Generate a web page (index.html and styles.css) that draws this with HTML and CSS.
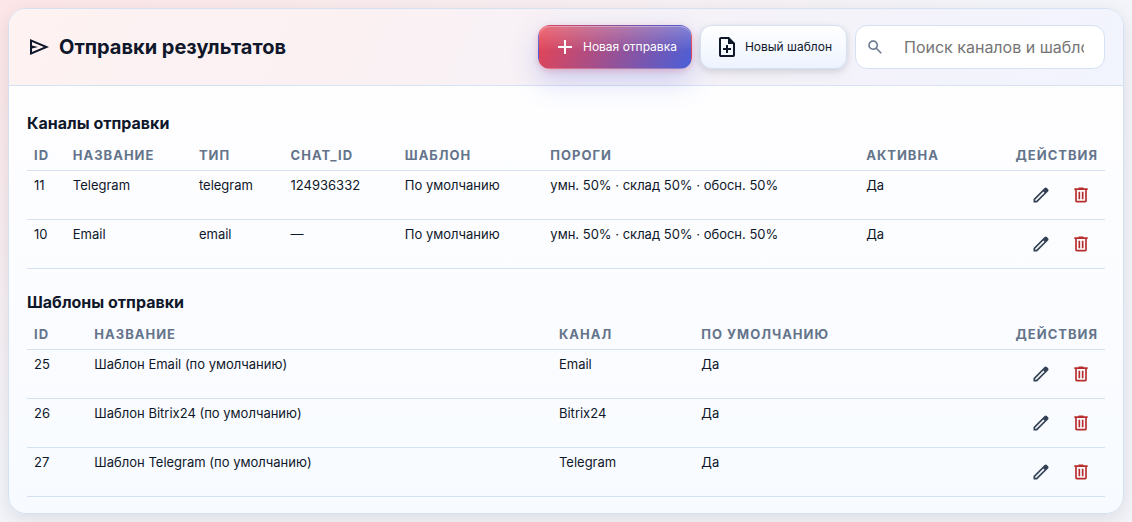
FILE: index.html
```
<!DOCTYPE html>
<html lang="ru">
<head>
  <meta charset="UTF-8" />
  <meta name="viewport" content="width=device-width, initial-scale=1.0"/>
  <title>Отправки результатов</title>
  <link rel="stylesheet" href="styles.css">
</head>
<body>

<svg class="sprite" aria-hidden="true">
  <symbol id="i-send" viewBox="0 -960 960 960"><path d="M120-160v-640l760 320-760 320Zm80-120 474-200-474-200v140l240 60-240 60v140Z"/></symbol>
  <symbol id="i-add" viewBox="0 -960 960 960"><path d="M440-440H200v-80h240v-240h80v240h240v80H520v240h-80v-240Z"/></symbol>
  <symbol id="i-note" viewBox="0 -960 960 960"><path d="M440-240h80v-120h120v-80H520v-120h-80v120H320v80h120v120ZM240-80q-33 0-56.5-23.5T160-160v-640q0-33 23.5-56.5T240-880h320l240 240v480q0 33-23.5 56.5T720-80H240Zm280-520v-200H240v640h480v-440H520Z"/></symbol>
  <symbol id="i-search" viewBox="0 -960 960 960"><path d="M784-120 532-372q-30 24-69 38t-83 14q-109 0-184.5-75.5T120-580q0-109 75.5-184.5T380-840q109 0 184.5 75.5T640-580q0 44-14 83t-38 69l252 252-56 56ZM380-400q75 0 127.5-52.5T560-580q0-75-52.5-127.5T380-760q-75 0-127.5 52.5T200-580q0 75 52.5 127.5T380-400Z"/></symbol>
  <symbol id="i-edit" viewBox="0 -960 960 960"><path d="M200-200h57l391-391-57-57-391 391v57Zm-80 80v-170l528-527q12-11 26.5-17t30.5-6q16 0 31 6t26 18l55 56q12 11 17.5 26t5.5 30q0 16-5.5 30.5T817-647L290-120H120Z"/></symbol>
  <symbol id="i-delete" viewBox="0 -960 960 960"><path d="M280-120q-33 0-56.5-23.5T200-200v-520h-40v-80h200v-40h240v40h200v80h-40v520q0 33-23.5 56.5T680-120H280Zm400-600H280v520h400v-520ZM360-280h80v-360h-80v360Zm160 0h80v-360h-80v360Z"/></symbol>
</svg>

<main class="card">
  <header class="card-head">
    <h1 class="title"><svg class="icon"><use href="#i-send"/></svg>Отправки результатов</h1>
    <div class="toolbar">
      <button type="button" class="btn btn-primary"><svg class="icon"><use href="#i-add"/></svg>Новая отправка</button>
      <button type="button" class="btn"><svg class="icon"><use href="#i-note"/></svg>Новый шаблон</button>
      <label class="search">
        <svg class="icon"><use href="#i-search"/></svg>
        <input type="text" aria-label="Поиск" placeholder="Поиск каналов и шаблонов">
      </label>
    </div>
  </header>

  <div class="card-body">
    <section>
      <h2>Каналы отправки</h2>
      <table class="table channels">
        <colgroup><col class="c-id"><col class="c-name"><col class="c-type"><col class="c-chat"><col class="c-tpl"><col class="c-limits"><col class="c-active"><col></colgroup>
        <thead>
          <tr><th>ID</th><th>Название</th><th>Тип</th><th>chat_id</th><th>Шаблон</th><th>Пороги</th><th>Активна</th><th class="right">Действия</th></tr>
        </thead>
        <tbody>
          <tr>
            <td>11</td><td>Telegram</td><td>telegram</td><td>124936332</td><td>По умолчанию</td><td>умн. 50% · склад 50% · обосн. 50%</td><td>Да</td>
            <td><div class="actions">
              <button type="button" class="icon-btn" aria-label="Изменить"><svg class="icon"><use href="#i-edit"/></svg></button>
              <button type="button" class="icon-btn danger" aria-label="Удалить"><svg class="icon"><use href="#i-delete"/></svg></button>
            </div></td>
          </tr>
          <tr>
            <td>10</td><td>Email</td><td>email</td><td>—</td><td>По умолчанию</td><td>умн. 50% · склад 50% · обосн. 50%</td><td>Да</td>
            <td><div class="actions">
              <button type="button" class="icon-btn" aria-label="Изменить"><svg class="icon"><use href="#i-edit"/></svg></button>
              <button type="button" class="icon-btn danger" aria-label="Удалить"><svg class="icon"><use href="#i-delete"/></svg></button>
            </div></td>
          </tr>
        </tbody>
      </table>
    </section>

    <section>
      <h2>Шаблоны отправки</h2>
      <table class="table templates">
        <colgroup><col class="t-id"><col class="t-name"><col class="t-channel"><col class="t-default"><col></colgroup>
        <thead>
          <tr><th>ID</th><th>Название</th><th>Канал</th><th>По умолчанию</th><th class="right">Действия</th></tr>
        </thead>
        <tbody>
          <tr>
            <td>25</td><td>Шаблон Email (по умолчанию)</td><td>Email</td><td>Да</td>
            <td><div class="actions">
              <button type="button" class="icon-btn" aria-label="Изменить"><svg class="icon"><use href="#i-edit"/></svg></button>
              <button type="button" class="icon-btn danger" aria-label="Удалить"><svg class="icon"><use href="#i-delete"/></svg></button>
            </div></td>
          </tr>
          <tr>
            <td>26</td><td>Шаблон Bitrix24 (по умолчанию)</td><td>Bitrix24</td><td>Да</td>
            <td><div class="actions">
              <button type="button" class="icon-btn" aria-label="Изменить"><svg class="icon"><use href="#i-edit"/></svg></button>
              <button type="button" class="icon-btn danger" aria-label="Удалить"><svg class="icon"><use href="#i-delete"/></svg></button>
            </div></td>
          </tr>
          <tr>
            <td>27</td><td>Шаблон Telegram (по умолчанию)</td><td>Telegram</td><td>Да</td>
            <td><div class="actions">
              <button type="button" class="icon-btn" aria-label="Изменить"><svg class="icon"><use href="#i-edit"/></svg></button>
              <button type="button" class="icon-btn danger" aria-label="Удалить"><svg class="icon"><use href="#i-delete"/></svg></button>
            </div></td>
          </tr>
        </tbody>
      </table>
    </section>
  </div>
</main>

</body>
</html>
```
FILE: styles.css
```
* {
  box-sizing: border-box;
}
body {
  margin: 0;
  padding: 8px;
  min-height: 100vh;
  font-family: Inter, sans-serif;
  font-size: 13px;
  line-height: 16px;
  color: #0f172a;
  background: radial-gradient(ellipse at 0 0, #fde6e7, rgba(253, 230, 231, 0) 65%), #f3f5fa;
}
.sprite {
  display: none;
}
.icon {
  width: 24px;
  height: 24px;
  fill: currentColor;
  flex: none;
}
.card {
  border: 1px solid #d5e1f1;
  border-radius: 18px;
  background: linear-gradient(180deg, #ffffff, #fbfcff 60%, #f7fbff);
  box-shadow: 0 6px 20px rgba(15, 23, 42, 0.1);
}
.card-head {
  display: flex;
  align-items: center;
  justify-content: space-between;
  gap: 16px;
  padding: 16px 18px;
  border-bottom: 1px solid #d5e1f1;
  border-radius: 17px 17px 0 0;
  background: linear-gradient(115deg, #fef2f2, #fbf1f3 30%, #f5f2f8 60%, #f2f4fe);
}
.title {
  display: flex;
  align-items: center;
  gap: 8px;
  margin: 0;
  font-size: 20px;
  line-height: 24px;
  font-weight: 700;
}
.toolbar {
  display: flex;
  gap: 8px;
}
.btn {
  display: flex;
  align-items: center;
  gap: 6px;
  height: 44px;
  padding: 0 14px;
  border: 1px solid #d5e1f1;
  border-radius: 12px;
  font: 400 12px/16px Inter, sans-serif;
  white-space: nowrap;
  color: #0f172a;
  background: linear-gradient(180deg, #ffffff, #edf3ff);
  box-shadow: 0 2px 6px rgba(15, 23, 42, 0.12), 0 6px 14px rgba(15, 23, 42, 0.05);
  cursor: pointer;
}
.btn-primary {
  border-color: transparent;
  color: #fff;
  background: linear-gradient(180deg, rgba(255, 255, 255, 0.24), rgba(255, 255, 255, 0) 60%), linear-gradient(115deg, #ea4350, #4a5fd8);
  box-shadow: inset 0 1px 0 rgba(255, 255, 255, 0.3), 0 2px 6px rgba(220, 60, 90, 0.25), 0 12px 28px rgba(80, 95, 220, 0.25);
}
.search {
  display: flex;
  align-items: center;
  gap: 10px;
  width: 250px;
  height: 44px;
  padding: 0 10px;
  border: 1px solid #d5e1f1;
  border-radius: 12px;
  background: #fff;
  color: #64748b;
}
.search .icon {
  width: 18px;
  height: 18px;
}
.search input {
  flex: 1;
  min-width: 0;
  padding: 0 10px;
  border: 0;
  outline: none;
  background: none;
  font: 16px/20px Inter, sans-serif;
}
.search input::placeholder {
  color: #757575;
}
.card-body {
  display: grid;
  gap: 12px;
  padding: 16px 18px;
}
h2 {
  margin: 12px 0 7px;
  font-size: 16px;
  line-height: 19px;
  font-weight: 700;
}
.table {
  width: 100%;
  table-layout: fixed;
  border-collapse: separate;
  border-spacing: 0;
}
.table th,
.table td {
  padding: 7px;
  border-bottom: 1px solid #d5e1f1;
  text-align: left;
  vertical-align: top;
  white-space: nowrap;
}
.table td {
  line-height: 14px;
}
.table th {
  color: #64748b;
  font-weight: 700;
  text-transform: uppercase;
  letter-spacing: 1px;
}
.table th.right {
  text-align: right;
}
.c-id { width: 3.6%; }
.c-name { width: 11.7%; }
.c-type { width: 8.5%; }
.c-chat { width: 10.6%; }
.c-tpl { width: 13.5%; }
.c-limits { width: 29.3%; }
.c-active { width: 11.4%; }
.t-id { width: 5.6%; }
.t-name { width: 43.1%; }
.t-channel { width: 13.2%; }
.t-default { width: 25%; }
.actions {
  display: flex;
  justify-content: flex-end;
  gap: 6px;
}
.icon-btn {
  display: grid;
  place-items: center;
  width: 34px;
  height: 34px;
  padding: 0;
  border: 0;
  border-radius: 10px;
  background: none;
  color: #334155;
  cursor: pointer;
}
.icon-btn .icon {
  width: 20px;
  height: 20px;
}
.icon-btn.danger {
  color: #b92c2c;
}
```
